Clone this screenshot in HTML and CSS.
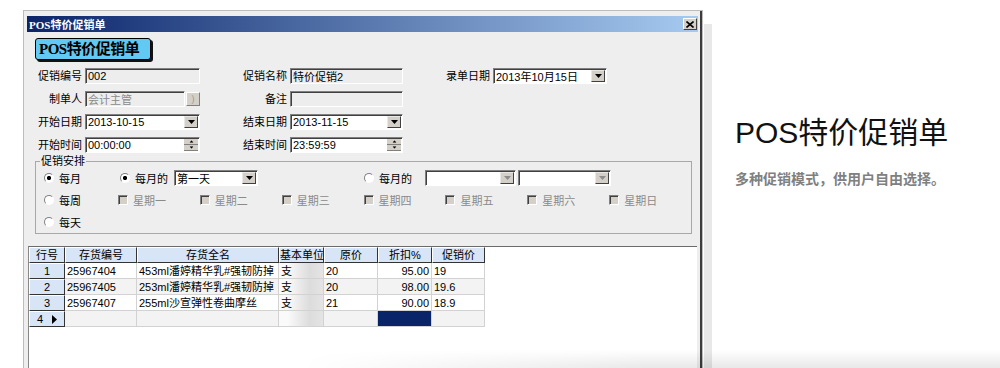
FILE: index.html
```html
<!DOCTYPE html>
<html lang="zh-CN">
<head>
  <meta charset="UTF-8">
  <title>POS特价促销单</title>
  <link rel="stylesheet" href="styles.css">
</head>
<body>

  <div class="page">
    <div class="window">
      <div class="titlebar">
        <span class="titlebar-text">POS特价促销单</span>
        <span class="close-btn">
          <svg width="8" height="7" viewBox="0 0 8 7"><path d="M0.5 0.5L7.5 6.5M7.5 0.5L0.5 6.5" stroke="#000" stroke-width="1.6"/></svg>
        </span>
      </div>

      <div class="window-body">
        <div class="badge">POS特价促销单</div>

        <div class="form-grid">
          <label>促销编号</label>
          <div class="field ro">002</div>
          <label>促销名称</label>
          <div class="field ro">特价促销2</div>
          <label>录单日期</label>
          <div class="field combo">
            <span>2013年10月15日</span>
            <span class="drop"><svg width="7" height="4" viewBox="0 0 7 4"><path d="M0 0h7L3.5 4z" fill="#000"/></svg></span>
          </div>

          <label>制单人</label>
          <div class="field-pair">
            <div class="field ro dim">会计主管</div>
            <span class="pick-btn">)</span>
          </div>
          <label>备注</label>
          <div class="field ro"></div>
          <div></div>
          <div></div>

          <label>开始日期</label>
          <div class="field combo">
            <span>2013-10-15</span>
            <span class="drop"><svg width="7" height="4" viewBox="0 0 7 4"><path d="M0 0h7L3.5 4z" fill="#000"/></svg></span>
          </div>
          <label>结束日期</label>
          <div class="field combo">
            <span>2013-11-15</span>
            <span class="drop"><svg width="7" height="4" viewBox="0 0 7 4"><path d="M0 0h7L3.5 4z" fill="#000"/></svg></span>
          </div>
          <div></div>
          <div></div>

          <label>开始时间</label>
          <div class="field combo">
            <span>00:00:00</span>
            <span class="spin">
              <span class="spin-btn"><svg width="5" height="3" viewBox="0 0 5 3"><path d="M0 3h5L2.5 0z" fill="#000"/></svg></span>
              <span class="spin-btn"><svg width="5" height="3" viewBox="0 0 5 3"><path d="M0 0h5L2.5 3z" fill="#000"/></svg></span>
            </span>
          </div>
          <label>结束时间</label>
          <div class="field combo">
            <span>23:59:59</span>
            <span class="spin">
              <span class="spin-btn"><svg width="5" height="3" viewBox="0 0 5 3"><path d="M0 3h5L2.5 0z" fill="#000"/></svg></span>
              <span class="spin-btn"><svg width="5" height="3" viewBox="0 0 5 3"><path d="M0 0h5L2.5 3z" fill="#000"/></svg></span>
            </span>
          </div>
        </div>

        <fieldset class="group">
          <legend>促销安排</legend>
          <div class="opt-row">
            <span class="opt w76"><span class="radio on"></span>每月</span>
            <span class="opt w54"><span class="radio on"></span>每月的</span>
            <div class="field combo w84">
              <span>第一天</span>
              <span class="drop"><svg width="7" height="4" viewBox="0 0 7 4"><path d="M0 0h7L3.5 4z" fill="#000"/></svg></span>
            </div>
            <span class="opt w61 push"><span class="radio"></span>每月的</span>
            <div class="field combo w91">
              <span></span>
              <span class="drop"><svg width="7" height="4" viewBox="0 0 7 4"><path d="M0 0h7L3.5 4z" fill="#8c8c8c"/></svg></span>
            </div>
            <div class="field combo w93">
              <span></span>
              <span class="drop"><svg width="7" height="4" viewBox="0 0 7 4"><path d="M0 0h7L3.5 4z" fill="#8c8c8c"/></svg></span>
            </div>
          </div>
          <div class="opt-row">
            <span class="opt w74"><span class="radio"></span>每周</span>
            <span class="opt w82 off"><span class="check"></span>星期一</span>
            <span class="opt w82 off"><span class="check"></span>星期二</span>
            <span class="opt w82 off"><span class="check"></span>星期三</span>
            <span class="opt w82 off"><span class="check"></span>星期四</span>
            <span class="opt w82 off"><span class="check"></span>星期五</span>
            <span class="opt w82 off"><span class="check"></span>星期六</span>
            <span class="opt w82 off"><span class="check"></span>星期日</span>
          </div>
          <div class="opt-row">
            <span class="opt"><span class="radio"></span>每天</span>
          </div>
        </fieldset>

        <div class="grid-panel">
          <table class="grid">
            <colgroup>
              <col style="width:36px">
              <col style="width:72px">
              <col style="width:142px">
              <col style="width:45px">
              <col style="width:54px">
              <col style="width:54px">
              <col style="width:53px">
            </colgroup>
            <tr>
              <th>行号</th>
              <th>存货编号</th>
              <th>存货全名</th>
              <th class="tight">基本单位</th>
              <th>原价</th>
              <th>折扣%</th>
              <th>促销价</th>
            </tr>
            <tr>
              <td class="rowhead">1</td>
              <td>25967404</td>
              <td>453ml潘婷精华乳#强韧防掉</td>
              <td class="unit">支</td>
              <td>20</td>
              <td class="num">95.00</td>
              <td>19</td>
            </tr>
            <tr class="alt">
              <td class="rowhead">2</td>
              <td>25967405</td>
              <td>253ml潘婷精华乳#强韧防掉</td>
              <td class="unit">支</td>
              <td>20</td>
              <td class="num">98.00</td>
              <td>19.6</td>
            </tr>
            <tr>
              <td class="rowhead">3</td>
              <td>25967407</td>
              <td>255ml沙宣弹性卷曲摩丝</td>
              <td class="unit">支</td>
              <td>21</td>
              <td class="num">90.00</td>
              <td>18.9</td>
            </tr>
            <tr class="alt">
              <td class="rowhead current">4<svg width="5" height="9" viewBox="0 0 5 9"><path d="M0 0L5 4.5L0 9z" fill="#000"/></svg></td>
              <td></td>
              <td></td>
              <td class="unit"></td>
              <td></td>
              <td class="sel"></td>
              <td></td>
            </tr>
          </table>
        </div>
      </div>
    </div>

    <div class="side-strip"></div>

    <div class="intro">
      <h2>POS特价促销单</h2>
      <p>多种促销模式，供用户自由选择。</p>
    </div>
  </div>

  <div class="floor-shadow"></div>

</body>
</html>
```

FILE: styles.css
```css
body {
  margin: 0;
  height: 368px;
  overflow: hidden;
  position: relative;
  background: #fff;
  font: 11px "Liberation Sans", "Noto Sans CJK SC", sans-serif;
  color: #000;
}

.page {
  display: flex;
  align-items: flex-start;
}

/* fenêtre style Windows classique */
.window {
  box-sizing: border-box;
  width: 680px;
  height: 358px;
  margin: 10px 0 0 23px;
  padding: 5px 4px 0 3px;
  border: 1px solid #bcbcbc;
  border-bottom: none;
  background: #eeeeee;
  box-shadow: inset -2px 0 0 #3c3c3c;
  display: flex;
  flex-direction: column;
}

.titlebar {
  height: 16px;
  flex: none;
  display: flex;
  align-items: center;
  justify-content: space-between;
  padding: 0 1px 0 2px;
  background: linear-gradient(to right, #0a246a, #a6caf0);
}

.titlebar-text {
  color: #fff;
  font: bold 11px "Liberation Serif", "Noto Sans CJK SC", serif;
}

.close-btn {
  box-sizing: border-box;
  width: 14px;
  height: 12px;
  display: flex;
  align-items: center;
  justify-content: center;
  background: #d4d0c8;
  border: 1px solid;
  border-color: #fff #404040 #404040 #fff;
}

.window-body {
  flex: 1;
  display: flex;
  flex-direction: column;
  padding-top: 6px;
}

.badge {
  box-sizing: border-box;
  width: 116px;
  height: 22px;
  margin-left: 8px;
  padding-left: 3px;
  background: #62c9f2;
  border: 1px solid #000;
  border-radius: 3px;
  box-shadow: 2px 2px 0 #111;
  font: bold 15px/20px "Liberation Serif", "Noto Sans CJK SC", serif;
  letter-spacing: -0.5px;
}

.form-grid {
  display: grid;
  grid-template-columns: 58px 115px 90px 113px 90px 114px;
  grid-auto-rows: 16px;
  row-gap: 7px;
  margin-top: 8px;
}

.form-grid label {
  text-align: right;
  padding-right: 3px;
  line-height: 16px;
  white-space: nowrap;
}

.field {
  box-sizing: border-box;
  height: 16px;
  display: flex;
  align-items: center;
  padding-left: 2px;
  border: 1px solid;
  border-color: #808080 #fff #fff #808080;
  box-shadow: inset 1px 1px 0 #404040;
  background: #fff;
  white-space: nowrap;
}

.field.ro {
  background: #ededed;
}

.field.dim {
  color: #8a8a8a;
  width: 100px;
}

.field-pair {
  display: flex;
  align-items: center;
}

.pick-btn {
  box-sizing: border-box;
  width: 14px;
  height: 14px;
  margin-left: 1px;
  background: #d4d0c8;
  border: 1px solid;
  border-color: #fff #808080 #808080 #fff;
  color: #9a9a9a;
  font-size: 9px;
  line-height: 12px;
  text-align: center;
}

.drop {
  box-sizing: border-box;
  width: 14px;
  height: 12px;
  margin: 0 1px 0 auto;
  display: flex;
  align-items: center;
  justify-content: center;
  background: #d4d0c8;
  border: 1px solid;
  border-color: #e8e8e8 #404040 #404040 #e8e8e8;
}

.spin {
  margin: 0 1px 0 auto;
  display: flex;
  flex-direction: column;
}

.spin-btn {
  box-sizing: border-box;
  width: 14px;
  height: 6px;
  display: flex;
  align-items: center;
  justify-content: center;
  background: #d4d0c8;
  border-bottom: 1px solid #808080;
}

.spin-btn svg {
  transform: scale(0.8);
}

/* zone "促销安排" */
.group {
  margin: 2px 6px 0 8px;
  padding: 0 0 0 8px;
  min-width: 0;
  border: 1px solid #a8a8a8;
}

.group legend {
  margin-left: -4px;
  padding: 0 1px;
  line-height: 12px;
}

.opt-row {
  display: flex;
  align-items: center;
  height: 22px;
}

.opt {
  display: flex;
  align-items: center;
  gap: 5px;
  white-space: nowrap;
}

.opt.off {
  color: #8a8a8a;
}

.push {
  margin-left: 106px;
}

.w54 { width: 54px; }
.w61 { width: 61px; }
.w74 { width: 74px; }
.w76 { width: 76px; }
.w82 { width: 82px; }
.w84 { width: 84px; }
.w91 { width: 91px; }
.w93 { width: 93px; margin-left: 2px; }

.radio {
  box-sizing: border-box;
  width: 10px;
  height: 10px;
  border-radius: 50%;
  border: 1px solid;
  border-color: #808080 #fff #fff #808080;
  background: #fff;
}

.radio.on {
  background: radial-gradient(circle, #000 0 1.8px, #fff 2.4px);
}

.check {
  box-sizing: border-box;
  width: 10px;
  height: 10px;
  border: 1px solid;
  border-color: #808080 #fff #fff #808080;
  box-shadow: inset 1px 1px 0 #404040;
  background: #d4d0c8;
}

/* grille des articles */
.grid-panel {
  flex: 1;
  margin: 12px 1px 0 1px;
  background: #fff;
  border-top: 1px solid #6a6a6a;
  border-left: 1px solid #888;
}

.grid {
  border-collapse: separate;
  border-spacing: 0;
  table-layout: fixed;
  width: 456px;
}

.grid tr {
  height: 16px;
}

.grid th,
.grid td {
  box-sizing: border-box;
  height: 16px;
  padding: 0 2px;
  font-weight: normal;
  line-height: 14px;
  white-space: nowrap;
  overflow: hidden;
}

.grid td {
  border-right: 1px solid #d2d2d2;
  border-bottom: 1px solid #d2d2d2;
}

.grid th,
.grid td.rowhead {
  background: #d8e5f6;
  border-top: 1px solid #fff;
  border-left: 1px solid #fff;
  border-right: 1px solid #333;
  border-bottom: 1px solid #333;
  text-align: center;
}

.grid th.tight {
  padding: 0;
  overflow: visible;
}

.grid tr.alt td {
  background-color: #f3f3f3;
}

.grid tr.alt td.rowhead {
  background: #d8e5f6;
}

.grid td.unit,
.grid tr.alt td.unit {
  background: linear-gradient(to right, #fafafa 20%, #dcdcdc 70%, #e4e4e4);
}

.grid td.num {
  text-align: right;
}

.grid td.sel,
.grid tr.alt td.sel {
  background: #0a246a;
}

.rowhead.current svg {
  margin-left: 9px;
  vertical-align: -1px;
}

.side-strip {
  width: 8px;
  height: 344px;
  margin: 24px 0 0 1px;
  background: #e8e8e8;
}

.intro {
  margin-left: 23px;
}

.intro h2 {
  margin: 115px 0 0;
  font: normal 30px/35px "Liberation Sans", "Noto Sans CJK SC", sans-serif;
  color: #111;
}

.intro p {
  margin: 18px 0 0;
  font: bold 14px/20px "Noto Sans CJK SC", sans-serif;
  color: #808080;
}

.floor-shadow {
  position: absolute;
  left: 0;
  right: 0;
  bottom: 0;
  height: 18px;
  background: linear-gradient(to bottom, rgba(0, 0, 0, 0), rgba(0, 0, 0, 0.09));
  -webkit-mask-image: linear-gradient(to right, transparent 30%, #000 65%);
  mask-image: linear-gradient(to right, transparent 30%, #000 65%);
}
```
